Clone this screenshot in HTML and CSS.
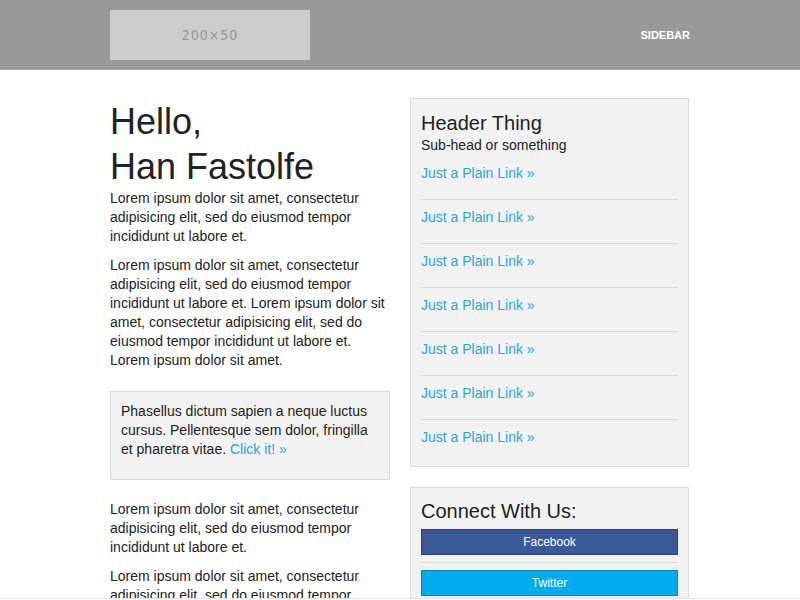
FILE: index.html
```html
<!DOCTYPE html>
<html>
<head>
<meta charset="utf-8">
<link rel="stylesheet" href="styles.css">
</head>
<body>
<header class="site-header">
  <div class="container header-inner">
    <div class="logo">200×50</div>
    <div class="header-label">SIDEBAR</div>
  </div>
</header>
<main class="container content">
  <section class="main-col">
    <h1 class="greeting">Hello,<br>Han Fastolfe</h1>
    <p class="text">Lorem ipsum dolor sit amet, consectetur adipisicing elit, sed do eiusmod tempor incididunt ut labore et.</p>
    <p class="text">Lorem ipsum dolor sit amet, consectetur adipisicing elit, sed do eiusmod tempor incididunt ut labore et. Lorem ipsum dolor sit amet, consectetur adipisicing elit, sed do eiusmod tempor incididunt ut labore et. Lorem ipsum dolor sit amet.</p>
    <div class="panel">
      <p class="text">Phasellus dictum sapien a neque luctus cursus. Pellentesque sem dolor, fringilla et pharetra vitae. <a class="link" href="#">Click it! »</a></p>
    </div>
    <p class="text">Lorem ipsum dolor sit amet, consectetur adipisicing elit, sed do eiusmod tempor incididunt ut labore et.</p>
    <p class="text">Lorem ipsum dolor sit amet, consectetur adipisicing elit, sed do eiusmod tempor incididunt ut labore et.</p>
  </section>
  <aside class="side-col">
    <div class="panel side-panel">
      <h2 class="side-title">Header Thing</h2>
      <p class="subhead">Sub-head or something</p>
      <ul class="link-list">
        <li class="link-item"><a class="link" href="#">Just a Plain Link »</a></li>
        <li class="link-item"><a class="link" href="#">Just a Plain Link »</a></li>
        <li class="link-item"><a class="link" href="#">Just a Plain Link »</a></li>
        <li class="link-item"><a class="link" href="#">Just a Plain Link »</a></li>
        <li class="link-item"><a class="link" href="#">Just a Plain Link »</a></li>
        <li class="link-item"><a class="link" href="#">Just a Plain Link »</a></li>
        <li class="link-item"><a class="link" href="#">Just a Plain Link »</a></li>
      </ul>
    </div>
    <div class="panel side-panel">
      <h2 class="side-title connect-title">Connect With Us:</h2>
      <a class="social-btn facebook" href="#">Facebook</a>
      <hr class="divider">
      <a class="social-btn twitter" href="#">Twitter</a>
      <hr class="divider">
      <a class="social-btn google" href="#">Google+</a>
    </div>
  </aside>
</main>
<div class="bottom-bar"></div>
</body>
</html>
```

FILE: styles.css
```css
html, body {
  margin: 0;
  padding: 0;
  background: #ffffff;
}
body {
  font-family: "Liberation Sans", Arial, Helvetica, sans-serif;
  color: #222222;
  font-size: 14px;
  line-height: 19px;
}
.container {
  width: 580px;
  margin: 0 auto;
}
.site-header {
  background: #999999;
  height: 69px;
  border-bottom: 1px solid #a3a3a3;
}
.header-inner {
  display: flex;
  justify-content: space-between;
  align-items: center;
  height: 69px;
}
.logo {
  width: 200px;
  height: 50px;
  margin-top: 1px;
  background: #cccccc;
  color: #959595;
  font-family: "DejaVu Sans Condensed", "DejaVu Sans", sans-serif;
  font-size: 14px;
  letter-spacing: 1px;
  display: flex;
  align-items: center;
  justify-content: center;
  padding-top: 1px;
  box-sizing: border-box;
}
.header-label {
  color: #ffffff;
  font-weight: bold;
  font-size: 11px;
  line-height: 14px;
  margin-top: 1px;
}
.content {
  display: grid;
  grid-template-columns: 280px 279px;
  column-gap: 20px;
  padding-top: 28px;
  align-items: start;
}
.greeting {
  font-size: 36px;
  line-height: 45px;
  font-weight: normal;
  margin: 1px 0 0;
}
.text {
  margin: 0 0 10px;
}
.link {
  color: #2ba6cb;
  text-decoration: none;
}
.panel {
  background: #f2f2f2;
  border: 1px solid #d9d9d9;
  padding: 10px;
  margin: 21px 0 20px;
}
.panel .text {
  margin-bottom: 10px;
}
.side-panel {
  margin: 0 0 20px;
}
.side-title {
  font-size: 20px;
  line-height: 26px;
  font-weight: normal;
  margin: 1px 0 0;
}
.subhead {
  margin: 0 0 9px;
}
.link-list {
  list-style: none;
  margin: 0;
  padding: 0;
}
.link-item {
  padding-bottom: 16px;
  border-bottom: 1px solid #d9d9d9;
  margin-bottom: 8px;
}
.link-item:last-child {
  border-bottom: none;
  margin-bottom: 0;
  padding-bottom: 9px;
}
.link-item .link {
  display: block;
}
.connect-title {
  margin: 0 0 5px;
}
.social-btn {
  display: block;
  height: 24px;
  line-height: 24px;
  text-align: center;
  color: #ffffff;
  font-size: 12px;
  text-decoration: none;
}
.facebook {
  background: #3b5998;
  border: 1px solid #2d4473;
}
.twitter {
  background: #00acee;
  border: 1px solid #0087bb;
}
.google {
  background: #db4a39;
  border: 1px solid #cc0000;
}
.divider {
  border: none;
  border-top: 1px solid #d9d9d9;
  margin: 7px 0;
  height: 0;
}
.bottom-bar {
  position: fixed;
  left: 0;
  right: 0;
  bottom: 0;
  height: 1px;
  border-top: 1px solid #e3e3e3;
  background: #ffffff;
}
```
